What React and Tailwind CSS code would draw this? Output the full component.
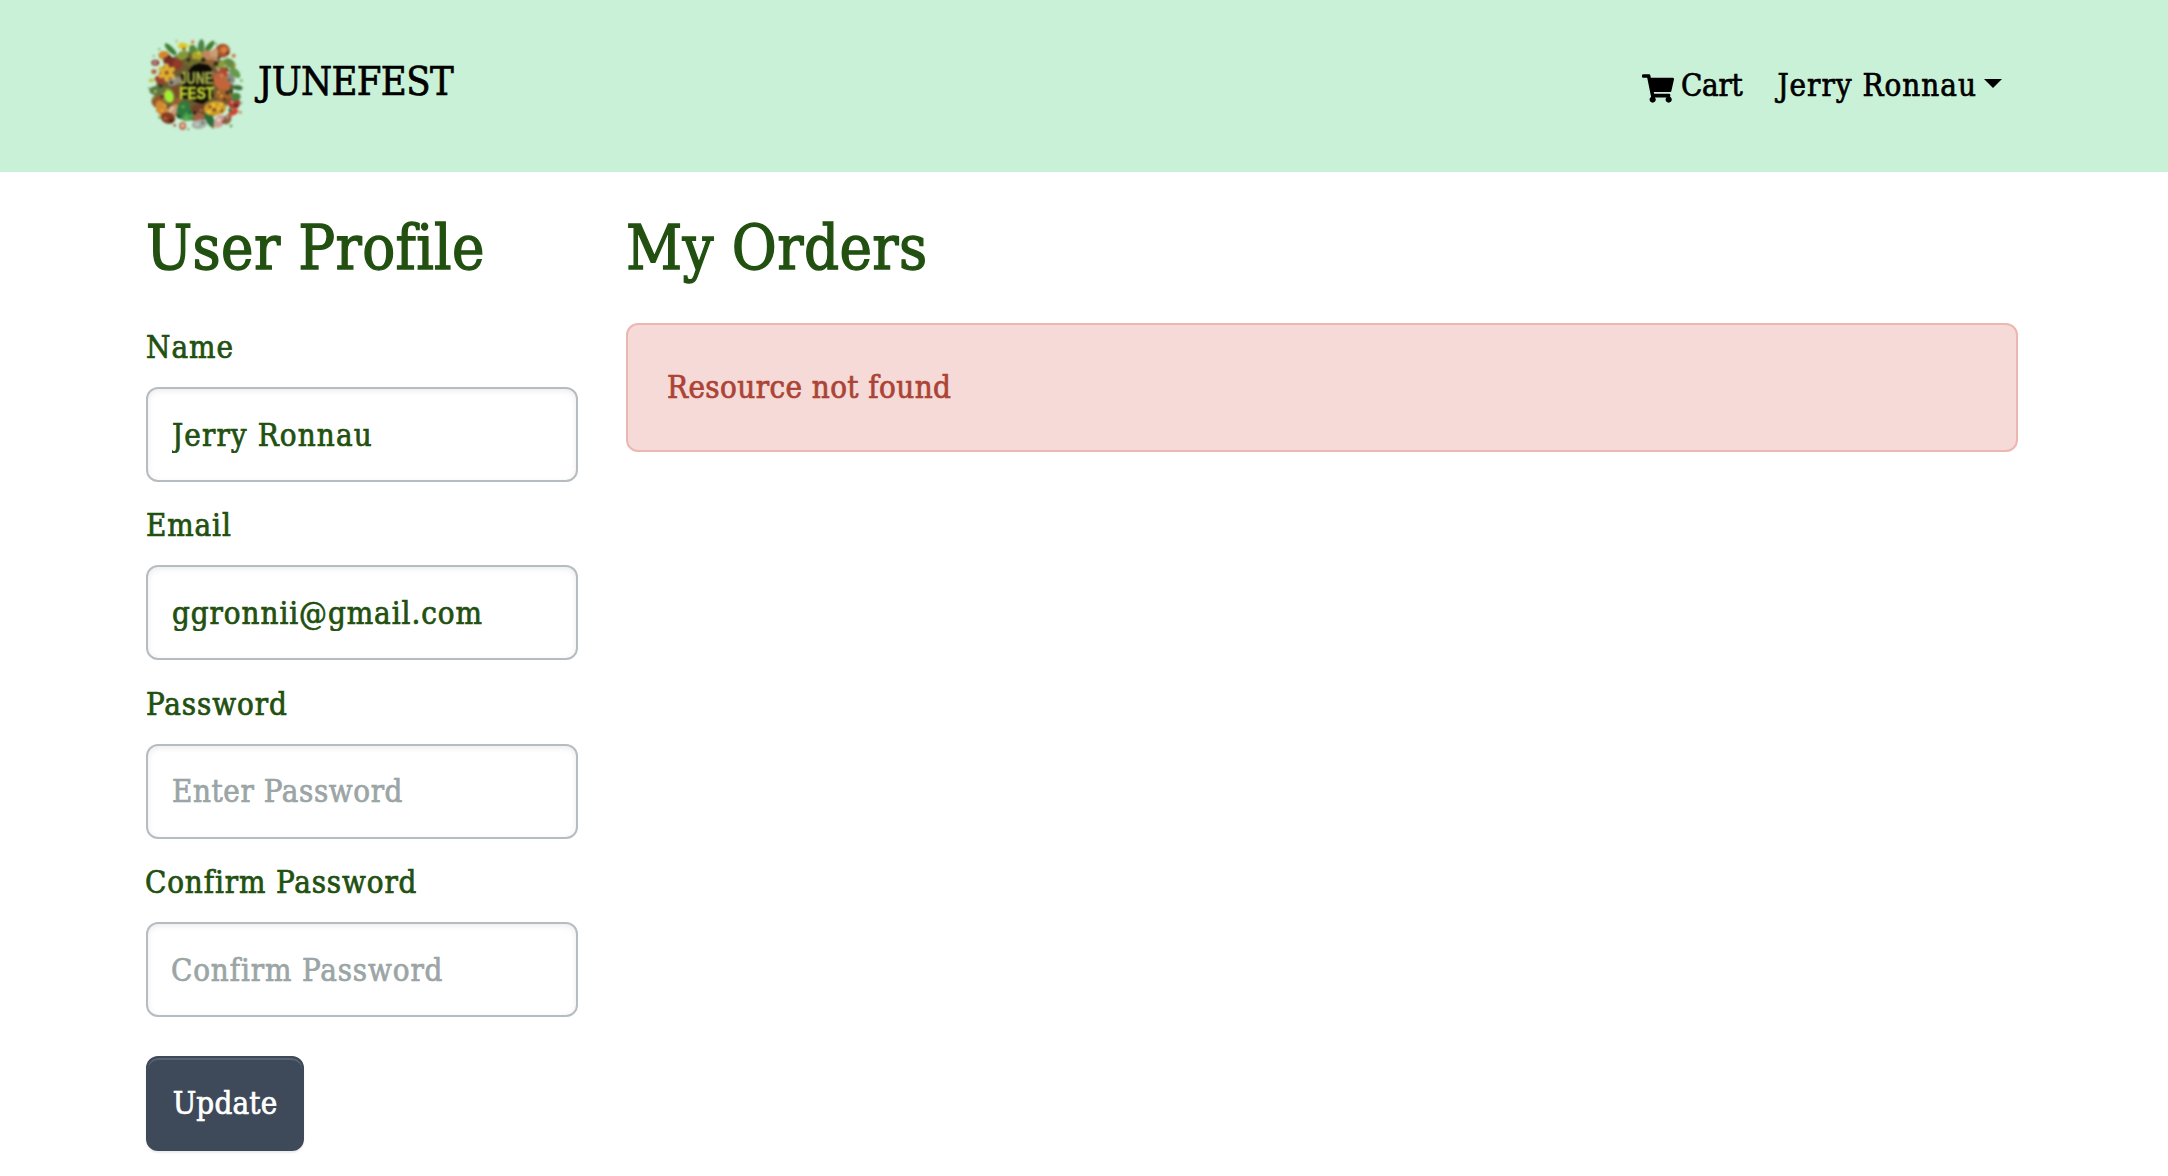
import React from "react";

// Fruit, leaves and flowers in the emblem: [cx, cy, rx, ry, rotation, colour]
const PIECES = [
  [165, 168, 116, 104, 0, "#6b5a30"],
  [92, 58, 24, 8, 45, "#3f7d35"],
  [128, 48, 15, 10, 10, "#d9c52f"],
  [158, 36, 5, 5, 0, "#d5763b"],
  [183, 53, 10, 25, 5, "#4f8447"],
  [208, 50, 22, 8, -50, "#447a2e"],
  [160, 62, 12, 18, -20, "#55863a"],
  [248, 62, 22, 21, 0, "#a4522a"],
  [252, 60, 11, 10, 0, "#d9803f"],
  [281, 77, 6, 6, 0, "#cf783a"],
  [72, 76, 17, 13, 0, "#d1862c"],
  [128, 76, 19, 13, -30, "#84983a"],
  [172, 78, 17, 15, 0, "#aba32d"],
  [210, 80, 27, 15, 35, "#bd875f"],
  [222, 68, 10, 14, 50, "#cc9c74"],
  [46, 98, 12, 9, 0, "#8c3b3a"],
  [45, 98, 6, 4, 0, "#cda087"],
  [90, 95, 21, 15, 20, "#762e26"],
  [112, 103, 14, 17, 0, "#933a28"],
  [160, 98, 28, 11, 0, "#6d6c2c"],
  [202, 100, 25, 10, -12, "#8b6230"],
  [245, 103, 22, 11, -30, "#869c40"],
  [270, 100, 19, 12, 40, "#648b41"],
  [285, 128, 20, 11, 45, "#659b49"],
  [270, 145, 14, 20, -20, "#87907f"],
  [293, 173, 15, 7, 10, "#376d38"],
  [245, 157, 21, 32, -35, "#c2653a"],
  [250, 126, 17, 11, 25, "#ad4a2f"],
  [42, 125, 8, 7, 0, "#b5663b"],
  [36, 151, 8, 6, 0, "#bdcf52"],
  [60, 150, 17, 11, 30, "#9b4030"],
  [103, 154, 21, 12, -25, "#948e82"],
  [52, 182, 24, 14, 0, "#587a40"],
  [112, 183, 21, 13, 25, "#7b4b29"],
  [58, 215, 24, 21, 20, "#915a2c"],
  [65, 236, 16, 26, -25, "#d18a31"],
  [110, 220, 18, 17, 0, "#93602f"],
  [98, 242, 23, 14, -42, "#c99b72"],
  [84, 264, 22, 17, 15, "#853b20"],
  [130, 240, 19, 29, 15, "#2f7a3e"],
  [147, 257, 23, 13, -30, "#459c4a"],
  [128, 288, 11, 12, 0, "#c3745a"],
  [176, 238, 22, 17, -10, "#724227"],
  [177, 261, 19, 13, 10, "#a16242"],
  [208, 266, 12, 27, -25, "#2c6c3b"],
  [178, 283, 23, 14, -8, "#a5ada4"],
  [239, 274, 15, 22, 40, "#cfa098"],
  [262, 268, 11, 16, 30, "#8f5e41"],
  [225, 235, 34, 22, -8, "#cf9a2a"],
  [282, 220, 19, 17, 0, "#a83e30"],
  [280, 247, 16, 9, -25, "#cf4735"],
  [288, 200, 14, 12, 0, "#48833d"],
  [250, 195, 24, 17, 0, "#a5632b"],
  [84, 196, 19, 23, -10, "#7d923b"],
];

// Small accents scattered over and around the wreath: [cx, cy, r, colour]
const DOTS = [
  [30, 152, 4, "#b9c947"], [28, 175, 3, "#5e8c42"], [40, 204, 4, "#77a04d"],
  [50, 243, 3, "#c98540"], [58, 262, 4, "#759d4f"], [104, 286, 4, "#a65231"],
  [145, 298, 3, "#639152"], [219, 292, 4, "#b07145"], [273, 288, 4, "#638c4c"],
  [301, 247, 4, "#b57a43"], [304, 218, 3, "#6e9950"], [304, 152, 4, "#7fae52"],
  [284, 105, 4, "#d58e3c"], [41, 78, 3, "#8d9a62"], [58, 58, 3, "#6a9b55"],
  [110, 34, 3, "#98a650"], [228, 41, 3, "#689653"], [132, 57, 4, "#6c3a1b"],
  [146, 45, 4, "#efdb42"], [118, 43, 4, "#f0d84a"], [177, 69, 5, "#ded13a"],
  [237, 82, 5, "#3c4422"], [263, 69, 5, "#682f19"], [88, 80, 5, "#4f251a"],
  [145, 90, 6, "#2e3118"], [190, 90, 7, "#312c18"], [228, 101, 7, "#392718"],
  [265, 128, 4, "#d5d1c6"], [268, 150, 5, "#5c6a68"], [281, 161, 4, "#c9d2c9"],
  [102, 145, 4, "#c7b8a8"], [94, 158, 5, "#493527"], [62, 168, 6, "#2f3b20"],
  [66, 200, 5, "#5b271b"], [46, 184, 5, "#a4b666"], [72, 183, 4, "#a34931"],
  [75, 226, 4, "#e8ad48"], [66, 241, 5, "#e9a43a"], [96, 235, 5, "#e6d2b0"],
  [91, 244, 4, "#e2c9a3"], [76, 265, 5, "#b96541"], [94, 272, 6, "#46251a"],
  [116, 260, 5, "#283d20"], [129, 230, 5, "#5cac4d"], [150, 247, 6, "#246a37"],
  [139, 264, 5, "#67ba5a"], [164, 248, 6, "#3b241a"], [183, 241, 4, "#b27952"],
  [171, 283, 6, "#c2c8bf"], [189, 278, 5, "#707d76"], [128, 287, 5, "#e8cdb5"],
  [207, 246, 7, "#e9c136"], [219, 226, 7, "#e7c238"], [236, 235, 7, "#e4b833"],
  [223, 240, 5, "#764519"], [243, 223, 5, "#eac843"], [210, 230, 5, "#8c541b"],
  [246, 243, 5, "#8c5a1d"], [276, 216, 5, "#d88a74"], [288, 226, 5, "#57221b"],
  [270, 240, 5, "#2e6030"], [236, 270, 5, "#ead8ce"], [250, 276, 4, "#7b3930"],
  [262, 261, 5, "#b9937a"], [235, 186, 4, "#d9a53b"], [262, 188, 6, "#31341c"],
  [244, 198, 4, "#dcb354"], [254, 208, 5, "#653218"], [245, 136, 6, "#cc855a"],
  [235, 119, 5, "#d2988e"], [255, 109, 4, "#c2c255"], [273, 184, 6, "#234c26"],
];

const FLOWER = [0, 60, 120, 180, 240, 300];

function Logo() {
  return (
    <svg viewBox="0 0 330 330" className="size-[110px] shrink-0 blur-[1px]">
      {PIECES.map(([x, y, rx, ry, a, c], i) => (
        <ellipse key={i} cx={x} cy={y} rx={rx} ry={ry} fill={c} transform={`rotate(${a} ${x} ${y})`} />
      ))}
      {DOTS.map(([x, y, r, c], i) => (
        <circle key={i} cx={x} cy={y} r={r} fill={c} />
      ))}
      <path d="M160 106l18-6 26 4 12 14-4 14 8 18-4 30 4 20-12 8-20 14-22-6-14-8-26-4-4-26 8-20-8-26 20-6z" fill="#0b0a04" />
      {FLOWER.map((a) => (
        <ellipse key={a} cx="80" cy="114" rx="8" ry="14" fill="#dfae33" transform={`rotate(${a} 80 128)`} />
      ))}
      <circle cx="80" cy="128" r="6" fill="#8a551b" />
      <ellipse cx="87" cy="199" rx="13" ry="19" fill="#a6ee35" transform="rotate(-20 87 199)" />
      <g fontFamily="Liberation Sans, sans-serif" fontWeight="700" strokeWidth="2">
        <text x="119" y="161" fontSize="48" textLength="100" lengthAdjust="spacingAndGlyphs" fill="#a3ab4a" stroke="#a3ab4a">JUNE</text>
        <text x="118" y="206" fontSize="48" textLength="104" lengthAdjust="spacingAndGlyphs" fill="#c3d536" stroke="#c3d536">FEST</text>
      </g>
      <circle cx="222" cy="133" r="7" fill="#a2604f" />
      <circle cx="234" cy="139" r="5" fill="#c05b45" />
      <circle cx="122" cy="157" r="5" fill="#8e9370" />
    </svg>
  );
}

function CartIcon() {
  return (
    <svg viewBox="0 0 576 512" className="h-[29px] w-[32px] shrink-0" fill="currentColor">
      <path d="M528.12 301.319l47.273-208C578.806 78.301 567.391 64 551.99 64H159.208l-9.166-44.81C147.758 8.021 137.93 0 126.529 0H24C10.745 0 0 10.745 0 24v16c0 13.255 10.745 24 24 24h69.883l70.248 343.435C147.325 417.1 136 435.222 136 456c0 30.928 25.072 56 56 56s56-25.072 56-56c0-15.674-6.447-29.835-16.824-40h209.647C430.447 426.165 424 440.326 424 456c0 30.928 25.072 56 56 56s56-25.072 56-56c0-22.172-12.888-41.332-31.579-50.405l5.517-24.276c3.413-15.018-8.002-29.319-23.403-29.319H218.117l-6.545-32h293.145c11.206 0 20.92-7.754 23.403-18.681z" />
    </svg>
  );
}

function Field({ label, labelClass, inputClass, ...input }) {
  return (
    <div className="mb-[19.4px] flex flex-col">
      <label className={`mb-4 h-12 leading-[48px] ${labelClass}`}>{label}</label>
      <input
        className={`h-[95px] w-[432px] rounded-xl border-2 border-[#b6bdc0] bg-white px-6 shadow-[inset_0_2px_6px_rgba(0,0,0,0.08)] outline-none placeholder:text-[#9ba5a6] placeholder:opacity-100 ${inputClass}`}
        readOnly
        {...input}
      />
    </div>
  );
}

export default function App() {
  return (
    <div className="h-[1176px] overflow-hidden bg-white font-['DejaVu_Serif_Condensed','DejaVu_Serif',serif] text-[31px] whitespace-nowrap text-[#225010] [-webkit-text-stroke:0.7px]">
      <header className="flex h-[172px] items-start justify-between bg-[#c9f1d7] pr-[166px] pl-[140px] text-black">
        <a className="flex pt-[30px]">
          <Logo />
          <span className="mt-[21px] ml-[8px] text-[39.5px] leading-[60px] tracking-[-0.6px]">JUNEFEST</span>
        </a>
        <nav className="flex pt-[61px] leading-[48px]">
          <a className="flex">
            <span className="mt-[12.5px] mr-[7px] flex h-[29px]">
              <CartIcon />
            </span>
            <span className="tracking-[-0.3px]">Cart</span>
          </a>
          <a className="ml-[35px] flex tracking-[1.03px]">
            Jerry Ronnau
            <span className="mt-[18px] ml-[7px] size-0 border-x-[9px] border-t-[9px] border-x-transparent border-t-current" />
          </a>
        </nav>
      </header>

      <main className="flex gap-12 pt-[39px] pl-[146px]">
        <section className="w-[432px]">
          <h1 className="mb-[38px] h-[74px] text-[61px] leading-[74px] tracking-[0.35px] [-webkit-text-stroke:1.3px]">User Profile</h1>
          <form className="flex flex-col items-start">
            <Field label="Name" labelClass="tracking-[1px]" inputClass="tracking-[1.13px]" defaultValue="Jerry Ronnau" />
            <Field label="Email" labelClass="tracking-[0.9px]" inputClass="tracking-[0.94px]" defaultValue="ggronnii@gmail.com" />
            <Field label="Password" labelClass="tracking-[0.9px]" inputClass="tracking-[0.6px]" placeholder="Enter Password" />
            <Field label="Confirm Password" labelClass="tracking-[0.87px] -ml-px" inputClass="tracking-[0.87px] pl-[23px]" placeholder="Confirm Password" />
            <button
              type="button"
              className="mt-[19.4px] h-[95px] w-[158px] rounded-xl border-2 border-[#3e4a59] bg-[#3e4a59] tracking-[0.2px] text-white shadow-[inset_0_2px_0_rgba(255,255,255,0.15),0_2px_2px_rgba(0,0,0,0.075)]"
            >
              Update
            </button>
          </form>
        </section>

        <section className="w-[1392px]">
          <h1 className="mb-[38px] h-[74px] text-[61px] leading-[74px] tracking-[0.4px] [-webkit-text-stroke:1.3px]">My Orders</h1>
          <div className="flex h-[129px] items-center rounded-xl border-2 border-[#edb7b1] bg-[#f5dad7] pl-[39px] tracking-[0.43px] text-[#ab4436]">
            Resource not found
          </div>
        </section>
      </main>
    </div>
  );
}
